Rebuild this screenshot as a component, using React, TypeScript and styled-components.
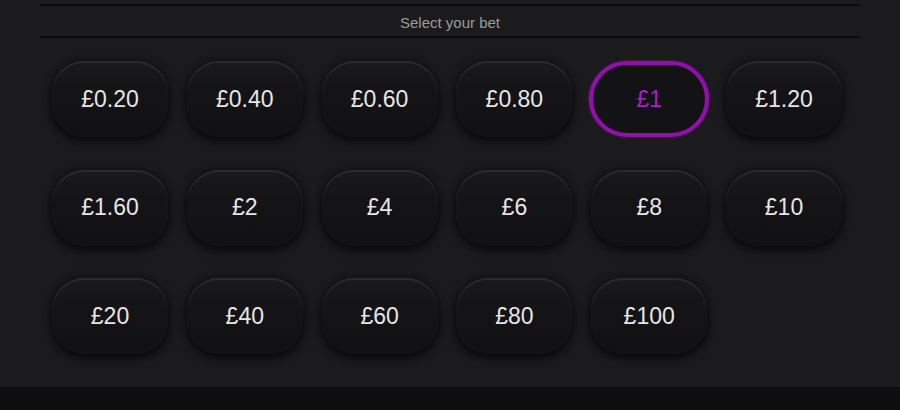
import styled, { createGlobalStyle, css } from "styled-components";

const GlobalStyle = createGlobalStyle`
  html, body {
    margin: 0;
    padding: 0;
    background: #1b1a1c;
  }
  body {
    font-family: "Liberation Sans", Arial, sans-serif;
  }
`;

const SPanel = styled.div`
  width: 900px;
  height: 410px;
  display: flex;
  flex-direction: column;
  background: #1b1a1c;
  overflow: hidden;
`;

const SHeader = styled.div`
  margin: 4px 40px 0;
  height: 34px;
  padding-top: 2px;
  display: flex;
  align-items: center;
  justify-content: center;
  border-top: 2px solid #0b0b0c;
  border-bottom: 2px solid #0b0b0c;
  box-sizing: border-box;
  color: #9b9a9c;
  font-size: 15px;
`;

const SGrid = styled.div`
  flex: 1;
  display: grid;
  grid-template-columns: repeat(6, 116px);
  grid-auto-rows: 76px;
  column-gap: 18.8px;
  row-gap: 32.5px;
  padding: 23px 0 0 52px;
  align-content: start;
`;

const SChip = styled.button<{ $active?: boolean }>`
  box-sizing: border-box;
  width: 116px;
  height: 76px;
  border: none;
  border-radius: 32px;
  background: linear-gradient(180deg, #1a191b 0%, #141315 40%, #111012 100%);
  box-shadow: 0 4px 10px rgba(0, 0, 0, 0.6), 0 0 8px rgba(0, 0, 0, 0.45),
    inset 0 2px 1px rgba(255, 255, 255, 0.08);
  color: #e6e6e6;
  font-family: "Liberation Sans", Arial, sans-serif;
  font-size: 23px;
  display: flex;
  align-items: center;
  justify-content: center;
  padding: 0;
  cursor: pointer;

  ${(p) =>
    p.$active &&
    css`
      width: 120px;
      margin-left: -2px;
      border-radius: 38px;
      background: #131214;
      border: 4px solid #920fae;
      box-shadow: 0 0 3px rgba(160, 20, 190, 0.6);
      color: #b01ccb;
    `}
`;

const SFooter = styled.div`
  height: 23px;
  background: #0e0d0f;
`;

const bets = [
  "£0.20", "£0.40", "£0.60", "£0.80", "£1", "£1.20",
  "£1.60", "£2", "£4", "£6", "£8", "£10",
  "£20", "£40", "£60", "£80", "£100",
];

const App = () => {
  return (
    <>
      <GlobalStyle />
      <SPanel>
        <SHeader>Select your bet</SHeader>
        <SGrid>
          {bets.map((b) => (
            <SChip key={b} $active={b === "£1"}>
              {b}
            </SChip>
          ))}
        </SGrid>
        <SFooter />
      </SPanel>
    </>
  );
};

export default App;
